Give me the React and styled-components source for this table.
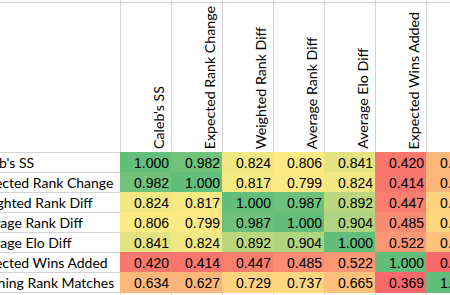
import React from "react";
import styled, { createGlobalStyle } from "styled-components";

const GlobalStyle = createGlobalStyle`
  html, body {
    margin: 0;
    padding: 0;
    background: #ffffff;
    overflow: hidden;
  }
  body {
    width: 450px;
    height: 295px;
  }
`;

const LABELS = [
  "Caleb's SS",
  "Expected Rank Change",
  "Weighted Rank Diff",
  "Average Rank Diff",
  "Average Elo Diff",
  "Expected Wins Added",
  "Winning Rank Matches",
];

const DATA = [
  [1.0, 0.982, 0.824, 0.806, 0.841, 0.42, 0.634],
  [0.982, 1.0, 0.817, 0.799, 0.824, 0.414, 0.627],
  [0.824, 0.817, 1.0, 0.987, 0.892, 0.447, 0.729],
  [0.806, 0.799, 0.987, 1.0, 0.904, 0.485, 0.737],
  [0.841, 0.824, 0.892, 0.904, 1.0, 0.522, 0.665],
  [0.42, 0.414, 0.447, 0.485, 0.522, 1.0, 0.369],
  [0.634, 0.627, 0.729, 0.737, 0.665, 0.369, 1.0],
];

// excel 3-colour scale: min red, 50th percentile yellow, max green
const RED = [248, 105, 107];
const YELLOW = [255, 235, 132];
const GREEN = [99, 190, 123];
const MIN = 0.369;
const MID = 0.806;
const MAX = 1.0;

const mix = (a, b, t) =>
  "rgb(" + a.map((v, i) => Math.round(v + (b[i] - v) * t)).join(",") + ")";

const scaleColor = (v) =>
  v <= MID
    ? mix(RED, YELLOW, (v - MIN) / (MID - MIN))
    : mix(YELLOW, GREEN, (v - MID) / (MAX - MID));

const Grid = styled.div`
  display: grid;
  grid-template-columns: 152px repeat(7, 51px);
  grid-template-rows: 3px 150px repeat(7, 20px) 20px;
  margin-left: -31px;
  width: max-content;
`;

const Cell = styled.div`
  box-sizing: border-box;
  border-right: 1px solid #d4d4d4;
  border-bottom: 1px solid #d4d4d4;
  overflow: hidden;
  white-space: nowrap;
`;

const HeadCell = styled(Cell)`
  display: flex;
  align-items: flex-end;
  justify-content: flex-end;
  padding: 0 3px 3px 0;
`;

const HeadText = styled.span`
  writing-mode: vertical-rl;
  transform: rotate(180deg);
  font-family: Lato, "Open Sans", sans-serif;
  font-size: 14.2px;
  line-height: 18px;
  color: #000;
`;

const Label = styled(Cell)`
  padding: 1px 0 0 3px;
  font-family: Lato, "Open Sans", sans-serif;
  font-size: 14px;
  line-height: 18px;
  color: #000;
`;

const Value = styled(Cell)`
  padding: 1px 2px 0 0;
  text-align: right;
  font-family: "Liberation Sans", Arial, sans-serif;
  font-size: 14px;
  line-height: 18px;
  color: #000;
  background: ${(p) => p.$fill};
  border-color: ${(p) => p.$fill};
  box-shadow: -1px -1px 0 0 ${(p) => p.$fill};
`;

export default function App() {
  return (
    <>
      <GlobalStyle />
      <Grid>
        {Array.from({ length: 8 }, (_, i) => (
          <Cell key={"top" + i} />
        ))}

        <HeadCell />
        {LABELS.map((l) => (
          <HeadCell key={"h" + l}>
            <HeadText>{l}</HeadText>
          </HeadCell>
        ))}

        {DATA.map((row, r) => (
          <React.Fragment key={LABELS[r]}>
            <Label>{LABELS[r]}</Label>
            {row.map((v, c) => (
              <Value key={c} $fill={scaleColor(v)}>
                {v.toFixed(3)}
              </Value>
            ))}
          </React.Fragment>
        ))}

        {Array.from({ length: 8 }, (_, i) => (
          <Cell key={"end" + i} />
        ))}
      </Grid>
    </>
  );
}
